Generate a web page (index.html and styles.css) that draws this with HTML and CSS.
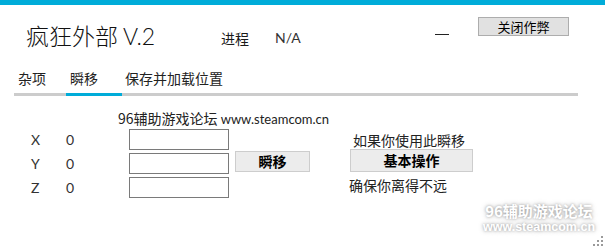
FILE: index.html
```html
<!DOCTYPE html>
<html lang="zh-CN">
<head>
<meta charset="utf-8">
<title>疯狂外部 V.2</title>
<link rel="stylesheet" href="styles.css">
</head>
<body>
<div class="window">
  <div class="topbar"></div>
  <header class="header">
    <h1 class="title">疯狂外部 <span class="lat">V.2</span></h1>
    <span class="proc-label">进程</span>
    <span class="proc-value lat">N/A</span>
    <span class="min-dash"></span>
    <button class="close-btn">关闭作弊</button>
  </header>
  <nav class="tabs">
    <span class="tab tab-misc">杂项</span>
    <span class="tab tab-tp active">瞬移</span>
    <span class="tab tab-save">保存并加载位置</span>
  </nav>
  <main class="content">
    <p class="site">96辅助游戏论坛 <span class="lat site-url">www.steamcom.cn</span></p>
    <div class="panel">
      <div class="coords">
        <span class="axis lat">X</span><span class="val lat">0</span><input class="field" type="text">
        <span class="axis lat">Y</span><span class="val lat">0</span><input class="field" type="text">
        <span class="axis lat">Z</span><span class="val lat">0</span><input class="field" type="text">
      </div>
      <button class="btn tp-btn">瞬移</button>
      <div class="info">
        <p class="info-top">如果你使用此瞬移</p>
        <button class="btn basic-btn">基本操作</button>
        <p class="info-bottom">确保你离得不远</p>
      </div>
    </div>
  </main>
  <div class="watermark">
    <div class="wm-cn">96辅助游戏论坛</div>
    <div class="wm-url">www.steamcom.cn</div>
  </div>
  <svg class="grip" width="10" height="10" viewBox="0 0 10 10">
    <rect x="8" y="0" width="2" height="2" fill="#9a9a9a"/>
    <rect x="4" y="4" width="2" height="2" fill="#9a9a9a"/>
    <rect x="8" y="4" width="2" height="2" fill="#9a9a9a"/>
    <rect x="0" y="8" width="2" height="2" fill="#9a9a9a"/>
    <rect x="4" y="8" width="2" height="2" fill="#9a9a9a"/>
    <rect x="8" y="8" width="2" height="2" fill="#9a9a9a"/>
  </svg>
</div>
</body>
</html>
```
FILE: styles.css
```css
* { box-sizing: border-box; }
html, body { margin: 0; padding: 0; background: #fff; }
body {
  font-family: "Noto Sans CJK SC", "Noto Sans", sans-serif;
  color: #1a1a1a;
  width: 605px;
  height: 249px;
  overflow: hidden;
}
.lat { font-family: "Lato", "Noto Sans CJK SC", sans-serif; }
.window { position: relative; width: 605px; height: 249px; }
.topbar { height: 5px; background: #00acd9; }

.header {
  display: flex;
  align-items: flex-start;
  height: 57px;
  padding-left: 26px;
}
.title {
  margin: 19px 0 0 0;
  width: 195px;
  font-size: 23px;
  line-height: 23px;
  font-weight: 300;
  color: #111;
  white-space: nowrap;
}
.proc-label {
  margin-top: 26px;
  width: 54px;
  font-size: 14px;
  line-height: 14px;
}
.proc-value {
  margin-top: 26px;
  width: 160px;
  font-size: 14px;
  line-height: 14px;
  color: #333;
}
.min-dash {
  margin-top: 29px;
  width: 14px;
  height: 1px;
  background: #222;
}
.close-btn {
  margin: 12px 0 0 29px;
  width: 91px;
  height: 19px;
  padding: 0;
  background: #e1e1e1;
  border: 1px solid #adadad;
  font-family: "Noto Sans CJK SC", sans-serif;
  font-size: 13px;
  line-height: 15px;
  color: #000;
}

.tabs {
  display: flex;
  margin-left: 14px;
  width: 564px;
  border-bottom: 3px solid #cccccc;
}
.tab {
  padding: 9px 0 8px 4px;
  font-size: 14px;
  line-height: 14px;
  margin-bottom: -3px;
  border-bottom: 3px solid transparent;
  color: #222;
}
.tab-misc { width: 52px; }
.tab-tp { width: 56px; }
.tab-save { padding-left: 3px; }
.tab.active { border-bottom-color: #00acd9; }

.content { padding: 0; }
.site {
  margin: 15px 0 0 118px;
  font-size: 14px;
  line-height: 14px;
  white-space: nowrap;
  color: #222;
}
.site-url { font-size: 13px; }
.panel {
  display: flex;
  align-items: flex-start;
  margin-top: 3px;
}
.coords {
  display: grid;
  grid-template-columns: 35px 63px 100px;
  grid-auto-rows: 21px;
  row-gap: 3px;
  align-items: center;
  padding-left: 31px;
}
.axis, .val {
  font-size: 14px;
  line-height: 14px;
  color: #333;
}
.field {
  width: 100px;
  height: 21px;
  margin: 0;
  border: 1px solid #7a7a7a;
  background: #fff;
  padding: 0;
}
.btn {
  padding: 0;
  background: #ececec;
  border: 1px solid #cdcdcd;
  font-family: "Noto Sans CJK SC", sans-serif;
  font-size: 14px;
  font-weight: 700;
  color: #000;
}
.tp-btn {
  margin: 22px 0 0 6px;
  width: 75px;
  height: 21px;
  line-height: 17px;
}
.info {
  display: flex;
  flex-direction: column;
  align-items: flex-start;
  margin-left: 39px;
}
.info-top {
  margin: 4px 0 0 4px;
  font-size: 14px;
  line-height: 14px;
  color: #222;
}
.basic-btn {
  margin: 2px 0 0 1px;
  width: 123px;
  height: 23px;
  line-height: 19px;
}
.info-bottom {
  margin: 6px 0 0 0;
  font-size: 14px;
  line-height: 14px;
  color: #222;
}

.watermark {
  position: absolute;
  right: 8px;
  top: 202px;
  width: 116px;
  text-align: center;
  color: #fff;
  font-weight: 700;
  text-shadow: 0 0 3px rgba(0,0,0,0.35), 0 0 6px rgba(0,0,0,0.2);
}
.wm-cn {
  font-size: 15px;
  line-height: 18px;
}
.wm-url {
  font-family: "Liberation Sans", "Noto Sans", sans-serif;
  font-size: 12.5px;
  line-height: 14px;
}
.grip {
  position: absolute;
  right: 2px;
  bottom: 3px;
}
```
